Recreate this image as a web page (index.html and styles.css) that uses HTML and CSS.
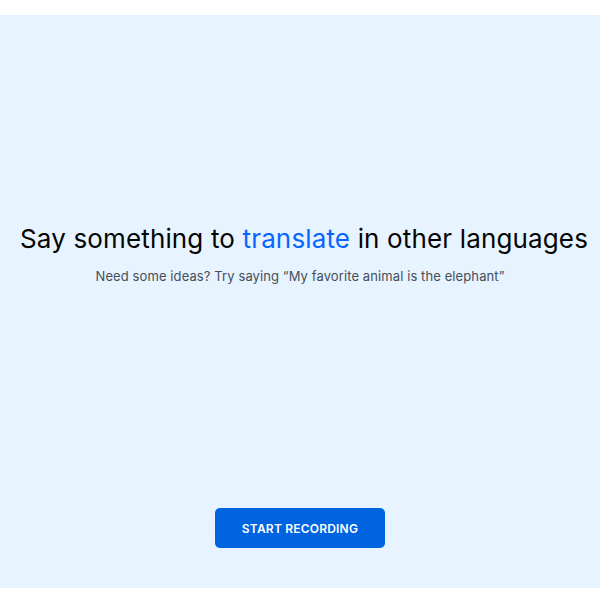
FILE: index.html
```html
<!DOCTYPE html>
<html>
  <head>
    <title>Translate</title>
    <link rel="stylesheet" href="styles.css">
  </head>
  <body>
    <main class="stage">
      <!-- prompt -->
      <section class="prompt">
        <h1 class="prompt-title">Say something to <span class="accent">translate</span> in other languages</h1>
        <p class="prompt-hint">Need some ideas? Try saying “My favorite animal is the elephant”</p>
      </section>
      <!-- controls -->
      <div class="controls">
        <button class="record-button">Start recording</button>
      </div>
    </main>
  </body>
</html>
```

FILE: styles.css
```css
body{
  margin: 0;
  padding: 0;
  background-color: rgb(255, 255, 255);
  font-family: Inter, "Noto Sans", sans-serif;
}
.stage{
  margin-top: 15px;
  height: 573px;
  background-color: rgb(231, 243, 255);
  display: flex;
  flex-direction: column;
  align-items: center;
}
.prompt{
  padding-top: 208px;
  text-align: center;
  flex: 1;
}
.prompt-title{
  margin: 0;
  padding-left: 8px;
  font-size: 26px;
  font-weight: 400;
  color: rgb(5, 5, 5);
  letter-spacing: 0.15px;
  white-space: nowrap;
}
.accent{
  color: rgb(8, 102, 255);
}
.prompt-hint{
  margin: 14px 0 0;
  font-size: 13px;
  letter-spacing: 0.1px;
  color: rgb(70, 78, 88);
}
.controls{
  padding-bottom: 40px;
}
.record-button{
  width: 170px;
  height: 40px;
  border: none;
  border-radius: 5px;
  background-color: rgb(0, 100, 224);
  color: rgb(255, 255, 255);
  font-family: Inter, "Noto Sans", sans-serif;
  font-size: 12px;
  font-weight: 600;
  text-transform: uppercase;
  letter-spacing: 0.2px;
  cursor: pointer;
}
```
